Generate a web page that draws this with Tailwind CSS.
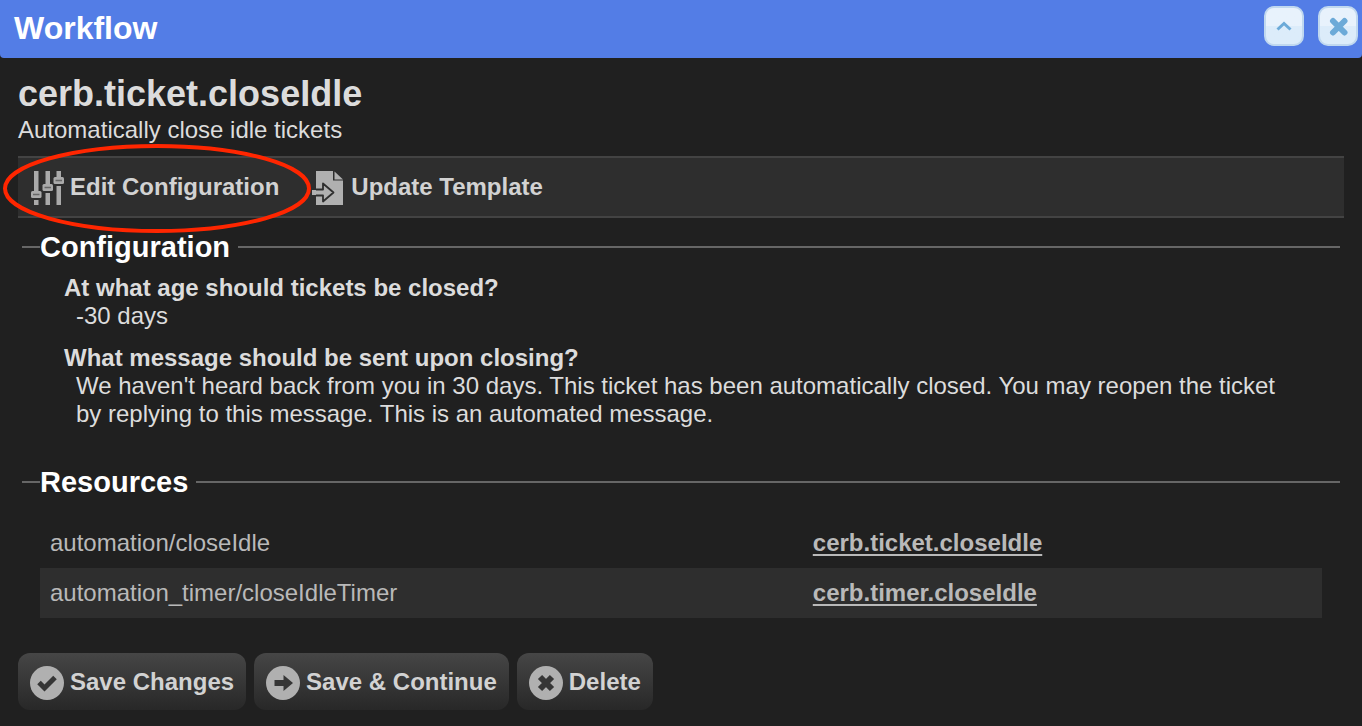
<!DOCTYPE html>
<html lang="en">
<head>
    <meta charset="UTF-8">
    <meta name="viewport" content="width=device-width, initial-scale=1.0">
    <title>Workflow</title>
    <script src="https://cdn.jsdelivr.net/npm/@tailwindcss/browser@4"></script>
</head>
<body class="bg-[#202020] min-h-screen font-['Liberation_Sans',Arial,sans-serif] text-2xl leading-7 text-[#dcdcdc]">

    <!-- Popup title bar -->
    <header class="flex items-start justify-between h-[58px] pt-1.5 pl-3.5 pr-1 bg-[#537de6] rounded-b-sm">
        <h1 class="text-[32px] leading-11 font-bold text-white">Workflow</h1>
        <div class="flex gap-3.5">
            <button type="button" aria-label="Minimize" class="w-10 h-10 flex items-center justify-center rounded-[10px] border-2 border-[#c0d8ef] bg-linear-to-b from-[#e8f2fc] from-50% to-[#dcecfa] to-50%">
                <svg width="16" height="12" viewBox="0 0 16 12" fill="none" stroke="#6caad8" stroke-width="3"><path d="M1.500 9.500L8 3.500L14.500 9.500"/></svg>
            </button>
            <button type="button" aria-label="Close" class="w-10 h-10 flex items-center justify-center rounded-[10px] border-2 border-[#c0d8ef] bg-linear-to-b from-[#e8f2fc] from-50% to-[#dcecfa] to-50%">
                <svg width="20" height="20" viewBox="0 0 20 20" stroke="#6caad8" stroke-width="6" stroke-linecap="round"><path d="M5 5L16.500 16.500M16.500 5L5 16.500"/></svg>
            </button>
        </div>
    </header>

    <main class="px-[18px] pt-3.5 pb-4">
        <h2 class="text-4xl leading-11 font-bold">cerb.ticket.closeIdle</h2>
        <p>Automatically close idle tickets</p>

        <!-- Toolbar -->
        <div class="relative flex items-center gap-8 mt-3 h-[62px] px-3 bg-[#2e2e2e] border-y-2 border-[#434343]">
            <button type="button" class="flex items-center gap-1.5 font-bold text-[#d2d2d2]">
                <svg width="34" height="34" viewBox="0 0 34 34" class="mt-0.5" fill="#aaaaaa">
                    <path d="M4 0h4.500v20H4zM4 29h4.500v5H4zM15.500 0h4.500v13h-4.500zM15.500 22h4.500v12h-4.500zM26.500 0h4.500v6h-4.500zM26.500 15h4.500v19h-4.500z"/>
                    <rect x="1" y="20" width="10.500" height="7" rx="1.500"/>
                    <rect x="12.500" y="13" width="10.500" height="7" rx="1.500"/>
                    <rect x="23.500" y="6" width="10.500" height="7" rx="1.500"/>
                    <path d="M3 23.500h6.500M14.500 16.500h6.500M25.500 9.500h6.500" stroke="#666666" stroke-width="1.500"/>
                </svg>
                <span>Edit Configuration</span>
            </button>
            <button type="button" class="flex items-center gap-1.5 font-bold text-[#d2d2d2]">
                <svg width="34" height="34" viewBox="0 0 34 34" class="mt-0.5" fill="#b0b0b0">
                    <path d="M5 0h17v9.500h10V34H5z"/>
                    <path d="M23.500 0.500L32 8.500H23.500z"/>
                    <path d="M1 18.500H12V12.500L22.500 21.500L12 30.500V24.500H1z" stroke="#2e2e2e" stroke-width="1.800" stroke-linejoin="round"/>
                    <path d="M1 19h4v5H1z"/>
                </svg>
                <span>Update Template</span>
            </button>

            <!-- Highlight ring -->
            <svg width="308" height="90" viewBox="0 0 308 90" class="absolute -left-[15px] -top-[14px] pointer-events-none" fill="none" stroke="#ff2600" stroke-width="4">
                <ellipse cx="154" cy="44.500" rx="152" ry="42.500"/>
            </svg>
        </div>

        <fieldset class="mx-1 mt-3 px-[18px] border-t-2 border-[#666666]">
            <legend class="pr-2 text-[29px] leading-[34px] font-bold text-white">Configuration</legend>
            <dl class="px-6 pt-2.5">
                <dt class="font-bold">At what age should tickets be closed?</dt>
                <dd class="pl-3 mb-3.5">-30 days</dd>
                <dt class="font-bold">What message should be sent upon closing?</dt>
                <dd class="pl-3">We haven't heard back from you in 30 days. This ticket has been automatically closed. You may reopen the ticket by replying to this message. This is an automated message.</dd>
            </dl>
        </fieldset>

        <fieldset class="mx-1 mt-[37px] px-[18px] border-t-2 border-[#666666]">
            <legend class="pr-2 text-[29px] leading-[34px] font-bold text-white">Resources</legend>
            <table class="w-full mt-[19px] table-fixed text-[#b9b9b9]">
                <tbody>
                    <tr class="h-[50px]">
                        <td class="w-[59.500%] px-2.5">automation/closeIdle</td>
                        <td class="px-2.5"><a href="#" class="font-bold underline decoration-2 underline-offset-3">cerb.ticket.closeIdle</a></td>
                    </tr>
                    <tr class="h-[50px] bg-[#2e2e2e]">
                        <td class="px-2.5">automation_timer/closeIdleTimer</td>
                        <td class="px-2.5"><a href="#" class="font-bold underline decoration-2 underline-offset-3">cerb.timer.closeIdle</a></td>
                    </tr>
                </tbody>
            </table>
        </fieldset>

        <div class="flex gap-2 mt-[35px]">
            <button type="button" class="flex items-center gap-1.5 h-[57px] px-3 rounded-xl bg-linear-to-b from-[#464646] to-[#282828] font-bold text-[#d2d2d2]">
                <svg width="34" height="34" viewBox="0 0 34 34" class="mt-0.5">
                    <circle cx="17" cy="17" r="17" fill="#b0b0b0"/>
                    <path d="M9 16.500L14.500 22L25 11.500" fill="none" stroke="#363636" stroke-width="5"/>
                </svg>
                <span>Save Changes</span>
            </button>
            <button type="button" class="flex items-center gap-1.5 h-[57px] px-3 rounded-xl bg-linear-to-b from-[#464646] to-[#282828] font-bold text-[#d2d2d2]">
                <svg width="34" height="34" viewBox="0 0 34 34" class="mt-0.5">
                    <circle cx="17" cy="17" r="17" fill="#b0b0b0"/>
                    <path d="M8.500 14h9V9L27 17L17.500 25V20h-9z" fill="#363636"/>
                </svg>
                <span>Save &amp; Continue</span>
            </button>
            <button type="button" class="flex items-center gap-1.5 h-[57px] px-3 rounded-xl bg-linear-to-b from-[#464646] to-[#282828] font-bold text-[#d2d2d2]">
                <svg width="34" height="34" viewBox="0 0 34 34" class="mt-0.5">
                    <circle cx="17" cy="17" r="17" fill="#b0b0b0"/>
                    <path d="M11 11L23 23M23 11L11 23" stroke="#363636" stroke-width="6"/>
                </svg>
                <span>Delete</span>
            </button>
        </div>
    </main>
</body>
</html>
